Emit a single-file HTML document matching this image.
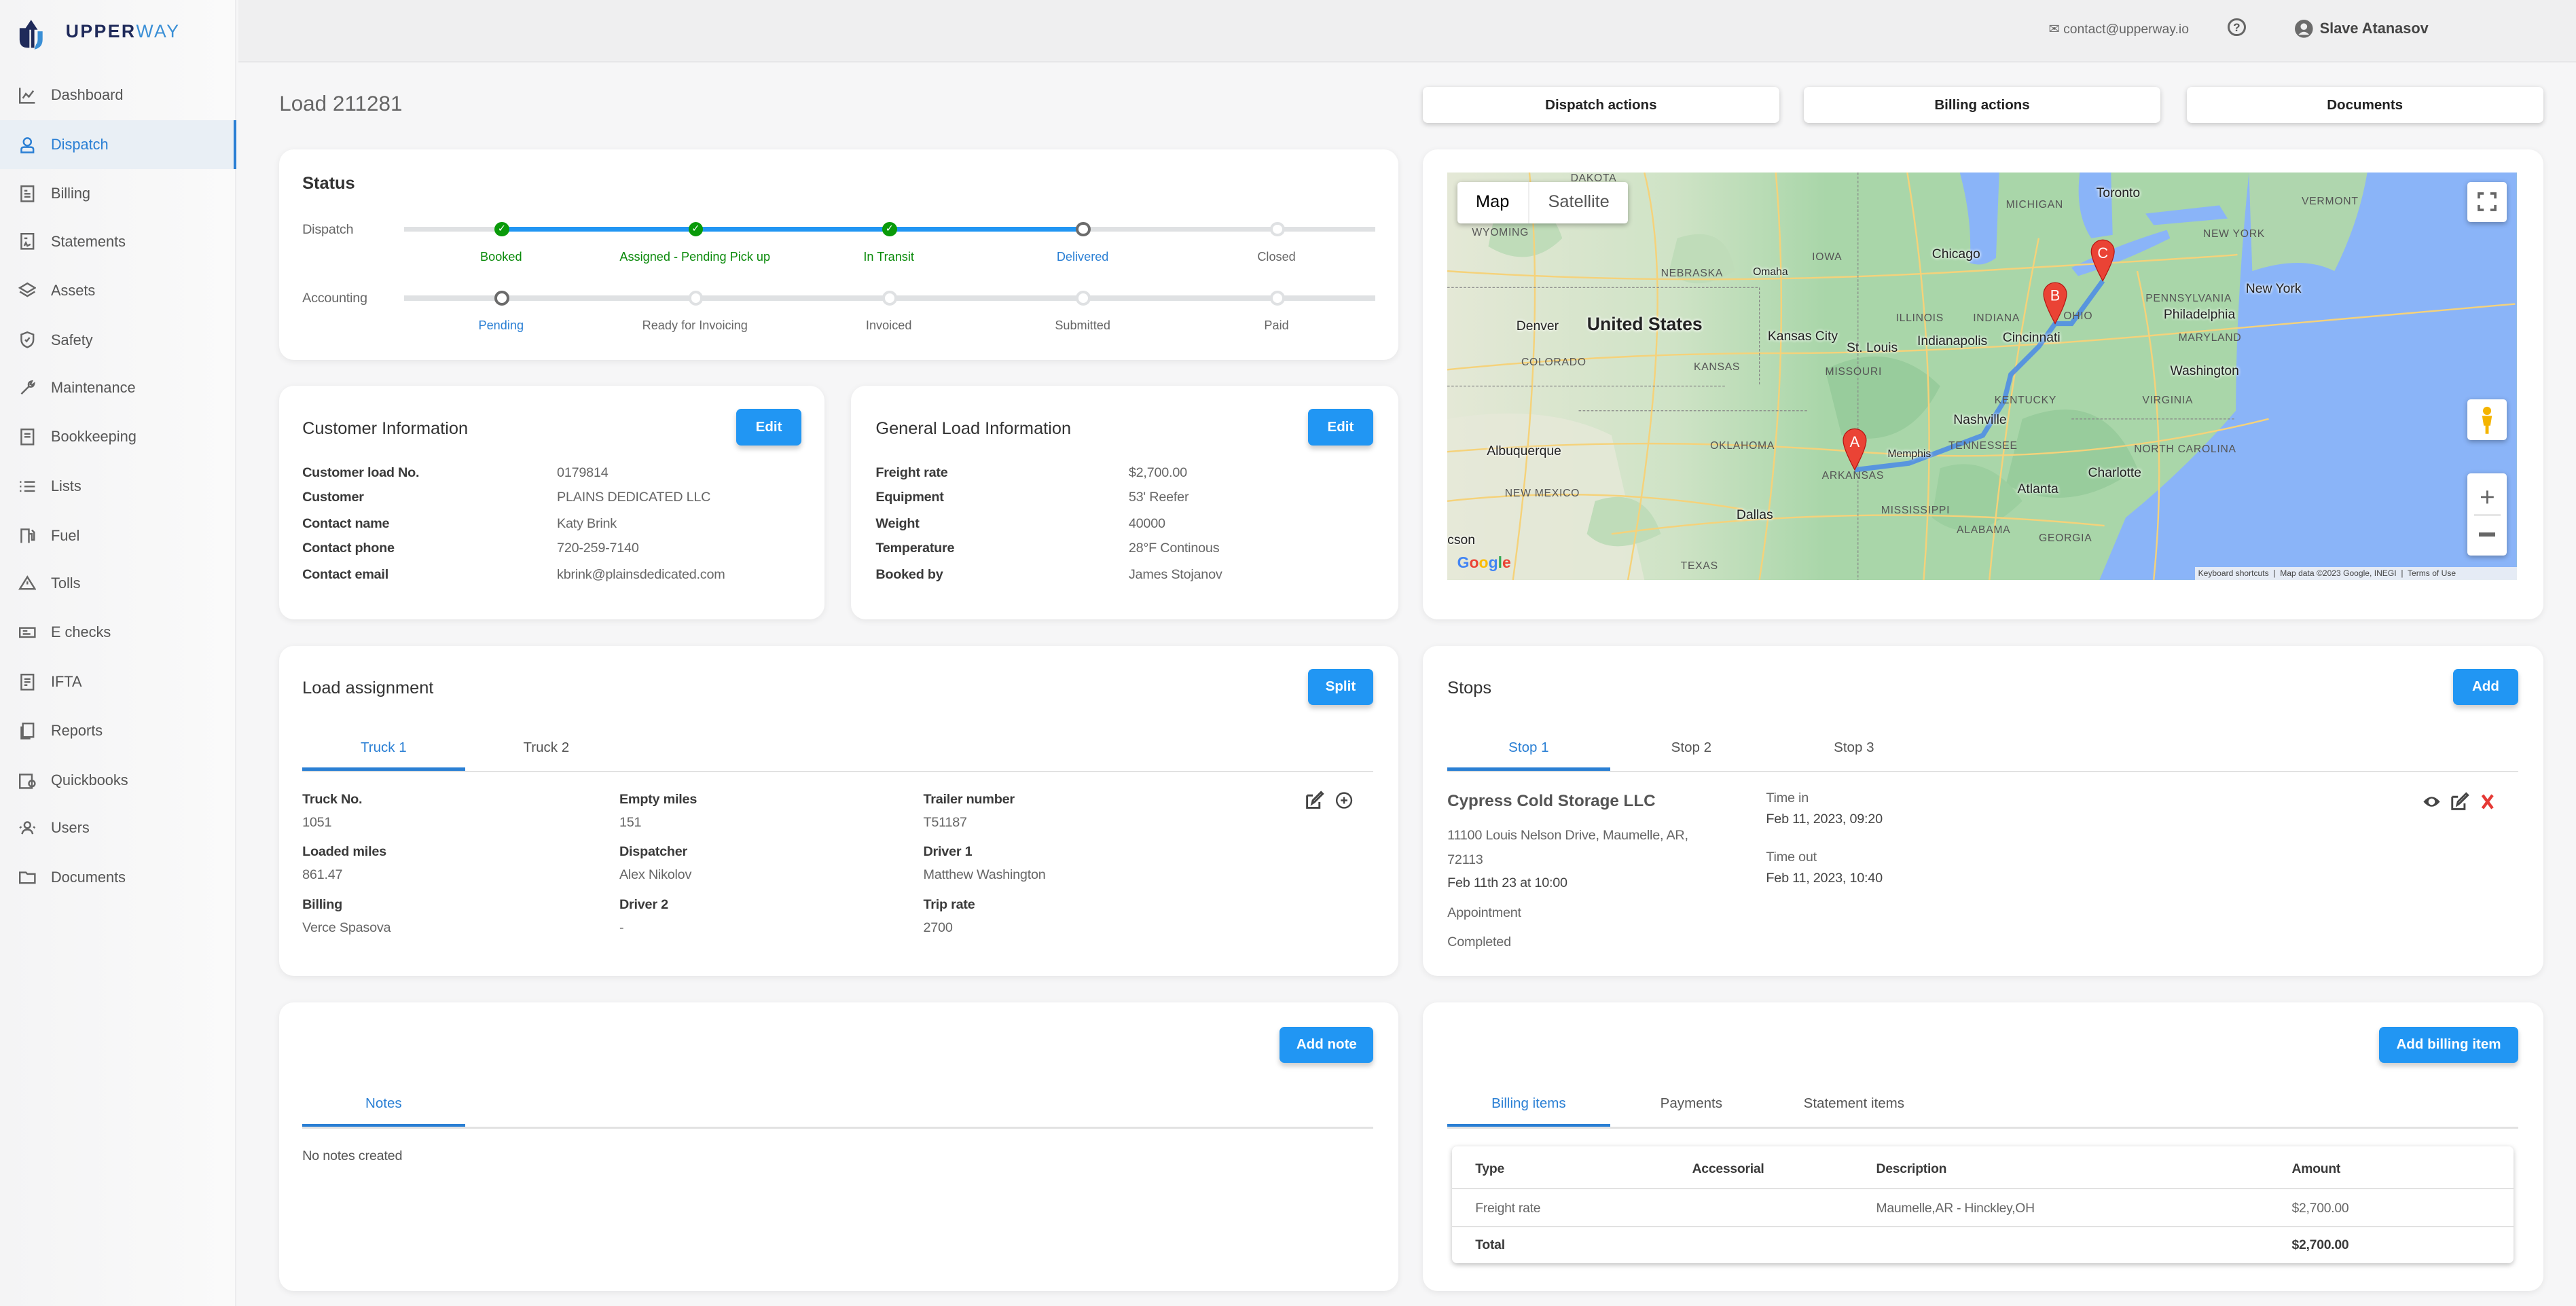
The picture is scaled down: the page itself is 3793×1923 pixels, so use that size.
<!DOCTYPE html>
<html><head><meta charset="utf-8">
<style>
*{box-sizing:border-box;margin:0;padding:0}
html,body{width:3793px;height:1923px;overflow:hidden;background:#f6f6f7}
#z{zoom:2.41901;width:1568px;height:795px;position:relative;font-family:"Liberation Sans",sans-serif;color:#555;font-size:8.5px;background:#f6f6f7}
.a{position:absolute}
.side{left:0;top:0;width:144px;height:795px;background:linear-gradient(90deg,#f4f4f5,#fafafa);border-right:1px solid #ececee}
.nav{position:absolute;left:0;width:144px;height:30px;display:flex;align-items:center;padding-left:11px;font-size:9px;color:#555}
.nav svg{width:11px;height:11px;margin-right:9px;stroke:#666;fill:none;stroke-width:1.1}
.nav.act{background:#e9eff5;color:#2a7fd4;border-right:2px solid #2a7fd4}
.nav.act svg{stroke:#2a7fd4}
.top{left:145px;top:0;width:1423px;height:38px;background:#efeff0;border-bottom:1px solid #e6e6e8}
.card{position:absolute;background:#fff;border-radius:9px;box-shadow:0 1px 4px rgba(0,0,0,.07)}
.btn{position:absolute;background:#fff;border-radius:3px;box-shadow:0 1px 3px rgba(0,0,0,.2);font-size:8.5px;font-weight:bold;color:#222;display:flex;align-items:center;justify-content:center}
.bb{position:absolute;background:#2196f3;color:#fff;border-radius:3px;box-shadow:0 2px 3px rgba(0,0,0,.2);font-size:8.5px;font-weight:bold;display:flex;align-items:center;justify-content:center}
.h{position:absolute;font-size:10.5px;color:#333}
.lb{position:absolute;font-size:8.2px;color:#3a3a3a;font-weight:bold;letter-spacing:-.1px}
.v{position:absolute;font-size:8.2px;color:#666;letter-spacing:-.1px}
.track{position:absolute;height:3px;background:#dfe1e3}
.dot{position:absolute;width:9px;height:9px;border-radius:50%;border:2px solid #dfe1e3;background:#fff}
.dot.g{background:#0a9a0a;border-color:#0a9a0a;color:#fff;font-size:6px;text-align:center;line-height:5px}
.dot.k{border-color:#6b6b6b}
.sl{position:absolute;font-size:7.5px;width:120px;text-align:center;color:#666}
.tab{position:absolute;font-size:8.5px;color:#555;text-align:center;width:99px}
.tab.on{color:#2a7fd4}
.tl{position:absolute;height:1px;background:#e2e2e2}
.tu{position:absolute;height:2px;background:#2a7fd4}
.ml{position:absolute;font-size:6.5px;color:#555;letter-spacing:.3px;white-space:nowrap}
.mc{position:absolute;font-size:8px;color:#222;white-space:nowrap;text-shadow:0 0 2px #fff,0 0 2px #fff}
</style></head><body><div id="z">

<div class="a side"></div>
<svg class="a" style="left:10px;top:9px" width="24" height="22" viewBox="0 0 24 22"><path d="M2 8 V15 Q2 20 7 20 H8 V8 Z" fill="#1f2a5a"/><path d="M5 9 L9 3 L13 9 H11 V20 H9 V9Z" fill="#1f2a5a"/><path d="M13 10 H16 V15 Q16 20 11 21 L12 18 Q13 17 13 15Z" fill="#3a8fd6"/></svg>
<div class="a" style="left:40px;top:13px;font-size:11px;font-weight:bold;letter-spacing:1px;color:#1f2a5a">UPPER<span style="color:#3a8fd6;font-weight:normal">WAY</span></div>

<div class="nav" style="top:43px"><svg viewBox="0 0 12 12"><path d="M1 1V11H11M3 8L5 5L7 7L10 3"/></svg>Dashboard</div>
<div class="nav act" style="top:73px"><svg viewBox="0 0 12 12"><circle cx="6" cy="4" r="2.5"/><path d="M2 11V9Q2 7.5 4 7.5H8Q10 7.5 10 9V11Z"/></svg>Dispatch</div>
<div class="nav" style="top:103px"><svg viewBox="0 0 12 12"><rect x="2" y="1" width="8" height="10"/><path d="M4 4H6M4 6H8M4 8H8"/></svg>Billing</div>
<div class="nav" style="top:132px"><svg viewBox="0 0 12 12"><rect x="2" y="1" width="8" height="10"/><path d="M4 4H6M4 9L5 7L6 9L8 8"/></svg>Statements</div>
<div class="nav" style="top:162px"><svg viewBox="0 0 12 12"><path d="M6 1L11 4L6 7L1 4Z M1 6.5L6 9.5L11 6.5"/></svg>Assets</div>
<div class="nav" style="top:192px"><svg viewBox="0 0 12 12"><path d="M6 1L10 2.5V6Q10 9.5 6 11Q2 9.5 2 6V2.5Z M4.5 6L5.5 7L7.5 4.5"/></svg>Safety</div>
<div class="nav" style="top:221px"><svg viewBox="0 0 12 12"><path d="M2 10L7 5Q6 2 9 1.5L8 3.5L9 4L10.5 3Q10 6 7 5"/></svg>Maintenance</div>
<div class="nav" style="top:251px"><svg viewBox="0 0 12 12"><rect x="2" y="1" width="8" height="10"/><path d="M4 4H8M4 6H8"/></svg>Bookkeeping</div>
<div class="nav" style="top:281px"><svg viewBox="0 0 12 12"><path d="M1 3H2M4 3H11M1 6H2M4 6H11M1 9H2M4 9H11"/></svg>Lists</div>
<div class="nav" style="top:311px"><svg viewBox="0 0 12 12"><path d="M2 11V2H7V11M7 5H9V9H10.5V4L9 2.5"/></svg>Fuel</div>
<div class="nav" style="top:340px"><svg viewBox="0 0 12 12"><path d="M1 10H11L6 2Z M6 5V7"/></svg>Tolls</div>
<div class="nav" style="top:370px"><svg viewBox="0 0 12 12"><rect x="1" y="3" width="10" height="6"/><path d="M3 5H6M3 7H8"/></svg>E checks</div>
<div class="nav" style="top:400px"><svg viewBox="0 0 12 12"><rect x="2" y="1" width="8" height="10"/><path d="M4 4H8M4 6H8M4 8H6"/></svg>IFTA</div>
<div class="nav" style="top:430px"><svg viewBox="0 0 12 12"><rect x="3" y="1" width="7" height="9"/><path d="M2 3V11H8"/></svg>Reports</div>
<div class="nav" style="top:460px"><svg viewBox="0 0 12 12"><rect x="1" y="2" width="8" height="9"/><circle cx="9" cy="8" r="2"/></svg>Quickbooks</div>
<div class="nav" style="top:489px"><svg viewBox="0 0 12 12"><circle cx="6" cy="4" r="2"/><path d="M2.5 10Q3 7 6 7Q9 7 9.5 10M1 6L2 5M11 6L10 5"/></svg>Users</div>
<div class="nav" style="top:519px"><svg viewBox="0 0 12 12"><path d="M1 3H5L6 4H11V10H1Z"/></svg>Documents</div>

<div class="a top"></div>
<div class="a" style="left:1247px;top:13px;font-size:8px;color:#666">✉ contact@upperway.io</div>
<div class="a" style="left:1356px;top:11px;width:11px;height:11px;border:1.3px solid #666;border-radius:50%;font-size:7px;text-align:center;line-height:9px;color:#555;font-weight:bold">?</div>
<svg class="a" style="left:1397px;top:12px" width="11" height="11"><circle cx="5.5" cy="5.5" r="5.5" fill="#6b6b6b"/><circle cx="5.5" cy="4.2" r="2" fill="#efeff0"/><path d="M2.2 9.2Q5.5 5.5 8.8 9.2" fill="#efeff0"/></svg>
<div class="a" style="left:1412px;top:12px;font-size:9px;font-weight:bold;color:#444">Slave Atanasov</div>

<div class="a" style="left:170px;top:56px;font-size:13px;color:#666">Load 211281</div>
<div class="btn" style="left:866px;top:53px;width:217px;height:22px">Dispatch actions</div>
<div class="btn" style="left:1098px;top:53px;width:217px;height:22px">Billing actions</div>
<div class="btn" style="left:1331px;top:53px;width:217px;height:22px">Documents</div>

<div class="card" style="left:170px;top:91px;width:681px;height:128px"></div>
<div class="h" style="left:184px;top:106px;font-weight:bold">Status</div>
<div class="v" style="left:184px;top:135px">Dispatch</div>
<div class="v" style="left:184px;top:177px">Accounting</div>
<div class="track" style="left:246px;top:138px;width:591px"></div>
<div class="track" style="left:305px;top:138px;width:354px;background:#2196f3"></div>
<div class="track" style="left:246px;top:180px;width:591px"></div>
<div class="dot g" style="left:301px;top:135px">✓</div><div class="dot g" style="left:419px;top:135px">✓</div><div class="dot g" style="left:537px;top:135px">✓</div><div class="dot k" style="left:655px;top:135px"></div><div class="dot" style="left:773px;top:135px"></div>
<div class="dot k" style="left:301px;top:177px"></div><div class="dot" style="left:419px;top:177px"></div><div class="dot" style="left:537px;top:177px"></div><div class="dot" style="left:655px;top:177px"></div><div class="dot" style="left:773px;top:177px"></div>
<div class="sl" style="left:245px;top:152px;color:#0a8a0a">Booked</div>
<div class="sl" style="left:363px;top:152px;color:#0a8a0a">Assigned - Pending Pick up</div>
<div class="sl" style="left:481px;top:152px;color:#0a8a0a">In Transit</div>
<div class="sl" style="left:599px;top:152px;color:#2a7fd4">Delivered</div>
<div class="sl" style="left:717px;top:152px">Closed</div>
<div class="sl" style="left:245px;top:194px;color:#2a7fd4">Pending</div>
<div class="sl" style="left:363px;top:194px">Ready for Invoicing</div>
<div class="sl" style="left:481px;top:194px">Invoiced</div>
<div class="sl" style="left:599px;top:194px">Submitted</div>
<div class="sl" style="left:717px;top:194px">Paid</div>

<div class="card" style="left:170px;top:235px;width:332px;height:142px"></div>
<div class="h" style="left:184px;top:255px">Customer Information</div>
<div class="bb" style="left:448px;top:249px;width:40px;height:22px">Edit</div>
<div class="lb" style="left:184px;top:283px">Customer load No.</div><div class="v" style="left:339px;top:283px">0179814</div>
<div class="lb" style="left:184px;top:298px">Customer</div><div class="v" style="left:339px;top:298px">PLAINS DEDICATED LLC</div>
<div class="lb" style="left:184px;top:314px">Contact name</div><div class="v" style="left:339px;top:314px">Katy Brink</div>
<div class="lb" style="left:184px;top:329px">Contact phone</div><div class="v" style="left:339px;top:329px">720-259-7140</div>
<div class="lb" style="left:184px;top:345px">Contact email</div><div class="v" style="left:339px;top:345px">kbrink@plainsdedicated.com</div>

<div class="card" style="left:518px;top:235px;width:333px;height:142px"></div>
<div class="h" style="left:533px;top:255px">General Load Information</div>
<div class="bb" style="left:796px;top:249px;width:40px;height:22px">Edit</div>
<div class="lb" style="left:533px;top:283px">Freight rate</div><div class="v" style="left:687px;top:283px">$2,700.00</div>
<div class="lb" style="left:533px;top:298px">Equipment</div><div class="v" style="left:687px;top:298px">53' Reefer</div>
<div class="lb" style="left:533px;top:314px">Weight</div><div class="v" style="left:687px;top:314px">40000</div>
<div class="lb" style="left:533px;top:329px">Temperature</div><div class="v" style="left:687px;top:329px">28°F Continous</div>
<div class="lb" style="left:533px;top:345px">Booked by</div><div class="v" style="left:687px;top:345px">James Stojanov</div>

<div class="card" style="left:866px;top:91px;width:682px;height:286px"></div>
<div class="a" style="left:881px;top:105px;width:651px;height:248px;overflow:hidden;background:#a9d6a9">
<svg width="651" height="248" style="position:absolute;left:0;top:0">
<defs><linearGradient id="w" x1="0" x2="1"><stop offset="0" stop-color="#e4e8d6"/><stop offset=".6" stop-color="#cfe3c6"/><stop offset="1" stop-color="#a9d6a9"/></linearGradient></defs>
<path d="M0 0H230V248H0Z" fill="url(#w)"/>
<path d="M0 150 Q60 140 100 160 L120 248 H0Z" fill="#e6e9d8" opacity=".8"/>
<path d="M30 20 Q60 10 70 40 Q50 60 25 45Z M90 200 Q120 190 130 220 Q100 235 85 220Z M140 40 Q170 30 175 60 Q150 75 135 60Z" fill="#bfdcb9"/>
<path d="M230 120 Q270 100 300 130 Q280 170 240 160Z" fill="#98cc9c"/>
<path d="M350 150 Q400 130 420 180 Q380 210 340 190Z" fill="#98cc9c"/>
<path d="M300 180 Q330 170 350 200 Q320 230 295 210Z" fill="#9ccf9f"/>
<path d="M488 0 Q480 80 480 145 Q450 180 413 210 L397 248 H651 V0Z" fill="#8ab4f8"/>
<path d="M488 0 H560 Q555 30 540 60 Q520 50 490 60Z" fill="#afd6ae"/>
<path d="M312 0 Q320 30 318 55 Q326 58 334 52 L336 0Z" fill="#8ab4f8"/>
<path d="M385 0 Q382 25 392 40 L405 38 L404 0Z" fill="#8ab4f8"/>
<path d="M380 58 Q405 45 438 35 L440 40 Q410 55 384 63Z" fill="#8ab4f8"/>
<path d="M425 25 L470 20 L475 28 L430 32Z" fill="#8ab4f8"/>
<g stroke="#f5d27a" stroke-width="1" fill="none">
<path d="M0 120 Q100 110 200 110 T420 100 T650 80"/>
<path d="M0 170 Q120 160 250 170 T500 150"/>
<path d="M50 0 Q60 100 40 248"/>
<path d="M200 0 Q210 120 190 248"/>
<path d="M280 0 Q300 120 290 248"/>
<path d="M360 40 Q340 140 330 248"/>
<path d="M420 60 Q440 150 430 248"/>
<path d="M0 60 Q150 70 320 60 T480 50"/>
<path d="M100 220 Q250 200 400 215"/>
<path d="M120 0 Q140 80 110 248"/>
<path d="M0 200 Q90 190 180 205"/>
</g>
<g stroke="#888" stroke-width=".5" stroke-dasharray="1.5 1" fill="none">
<path d="M0 70H190V130M80 145H220M250 0V248M0 130H170M380 150H480"/>
</g>
<path d="M248 181 L281 177 L326 160 L339 139 L343 123 L360 106 L370 92 L380 92 L399 66" stroke="#4a8ae8" stroke-width="3" fill="none" opacity=".85"/>
<g fill="#ea4335" stroke="#b31412" stroke-width=".5">
<path d="M248 181 Q241 168 241 163 A7 7 0 1 1 255 163 Q255 168 248 181Z"/>
<path d="M370 92 Q363 79 363 74 A7 7 0 1 1 377 74 Q377 79 370 92Z"/>
<path d="M399 66 Q392 53 392 48 A7 7 0 1 1 406 48 Q406 53 399 66Z"/>
</g>
<text x="248" y="167" fill="#fff" font-size="9" text-anchor="middle" font-family="Liberation Sans">A</text>
<text x="370" y="78" fill="#fff" font-size="9" text-anchor="middle" font-family="Liberation Sans">B</text>
<text x="399" y="52" fill="#fff" font-size="9" text-anchor="middle" font-family="Liberation Sans">C</text>
</svg>
<div class="mc" style="left:85px;top:86px;font-size:11px;font-weight:bold">United States</div>
<div class="mc" style="left:42px;top:89px">Denver</div>
<div class="mc" style="left:195px;top:95px">Kansas City</div>
<div class="mc" style="left:243px;top:102px">St. Louis</div>
<div class="mc" style="left:295px;top:45px">Chicago</div>
<div class="mc" style="left:395px;top:8px">Toronto</div>
<div class="mc" style="left:286px;top:98px">Indianapolis</div>
<div class="mc" style="left:338px;top:96px">Cincinnati</div>
<div class="mc" style="left:436px;top:82px">Philadelphia</div>
<div class="mc" style="left:486px;top:66px">New York</div>
<div class="mc" style="left:440px;top:116px">Washington</div>
<div class="mc" style="left:308px;top:146px">Nashville</div>
<div class="mc" style="left:24px;top:165px">Albuquerque</div>
<div class="mc" style="left:390px;top:178px">Charlotte</div>
<div class="mc" style="left:347px;top:188px">Atlanta</div>
<div class="mc" style="left:176px;top:204px">Dallas</div>
<div class="mc" style="left:0px;top:219px">cson</div>
<div class="mc" style="left:268px;top:168px;font-size:6.5px">Memphis</div>
<div class="mc" style="left:186px;top:57px;font-size:6.5px">Omaha</div>
<div class="ml" style="left:130px;top:58px">NEBRASKA</div><div class="ml" style="left:222px;top:48px">IOWA</div>
<div class="ml" style="left:45px;top:112px">COLORADO</div><div class="ml" style="left:150px;top:115px">KANSAS</div>
<div class="ml" style="left:230px;top:118px">MISSOURI</div><div class="ml" style="left:273px;top:85px">ILLINOIS</div>
<div class="ml" style="left:320px;top:85px">INDIANA</div><div class="ml" style="left:375px;top:84px">OHIO</div>
<div class="ml" style="left:333px;top:135px">KENTUCKY</div><div class="ml" style="left:423px;top:135px">VIRGINIA</div>
<div class="ml" style="left:305px;top:163px">TENNESSEE</div><div class="ml" style="left:160px;top:163px">OKLAHOMA</div>
<div class="ml" style="left:228px;top:181px">ARKANSAS</div><div class="ml" style="left:35px;top:192px">NEW MEXICO</div>
<div class="ml" style="left:264px;top:202px">MISSISSIPPI</div><div class="ml" style="left:310px;top:214px">ALABAMA</div>
<div class="ml" style="left:360px;top:219px">GEORGIA</div><div class="ml" style="left:142px;top:236px">TEXAS</div>
<div class="ml" style="left:425px;top:73px">PENNSYLVANIA</div><div class="ml" style="left:340px;top:16px">MICHIGAN</div>
<div class="ml" style="left:460px;top:34px">NEW YORK</div><div class="ml" style="left:418px;top:165px">NORTH CAROLINA</div>
<div class="ml" style="left:15px;top:33px">WYOMING</div><div class="ml" style="left:445px;top:97px">MARYLAND</div>
<div class="ml" style="left:520px;top:14px">VERMONT</div><div class="ml" style="left:75px;top:0px">DAKOTA</div>
<div class="a" style="left:6px;top:6px;width:104px;height:25px;background:#fff;border-radius:2px;box-shadow:0 1px 3px rgba(0,0,0,.3)"></div>
<div class="a" style="left:6px;top:12px;width:43px;text-align:center;font-size:10.5px;color:#000">Map</div>
<div class="a" style="left:49px;top:6px;width:1px;height:25px;background:#eee"></div>
<div class="a" style="left:50px;top:12px;width:60px;text-align:center;font-size:10.5px;color:#555">Satellite</div>
<div class="a" style="left:621px;top:6px;width:24px;height:24px;background:#fff;border-radius:2px;box-shadow:0 1px 3px rgba(0,0,0,.3)"><svg width="24" height="24"><path d="M7 10V7H10M14 7H17V10M17 14V17H14M10 17H7V14" stroke="#666" stroke-width="1.5" fill="none"/></svg></div>
<div class="a" style="left:621px;top:138px;width:24px;height:25px;background:#fff;border-radius:2px;box-shadow:0 1px 3px rgba(0,0,0,.3)"><svg width="24" height="25"><circle cx="12" cy="7" r="2.5" fill="#f4b400"/><path d="M9 10H15L14 16H13V21H11V16H10Z" fill="#f4b400"/></svg></div>
<div class="a" style="left:621px;top:183px;width:24px;height:50px;background:#fff;border-radius:2px;box-shadow:0 1px 3px rgba(0,0,0,.3)"><div class="a" style="left:0;top:6px;width:24px;text-align:center;font-size:16px;color:#666">+</div><div class="a" style="left:4px;top:25px;width:16px;height:1px;background:#e6e6e6"></div><div class="a" style="left:7px;top:36px;width:10px;height:2.5px;background:#666"></div></div>
<div class="a" style="left:6px;top:232px;font-size:9.5px;font-weight:bold;color:#4285f4">G<span style="color:#ea4335">o</span><span style="color:#fbbc05">o</span>g<span style="color:#34a853">l</span><span style="color:#ea4335">e</span></div>
<div class="a" style="left:455px;top:240px;width:196px;height:8px;background:rgba(245,245,245,.85);font-size:5px;color:#444;line-height:8px;white-space:nowrap;padding-left:2px">Keyboard shortcuts &nbsp;|&nbsp; Map data ©2023 Google, INEGI &nbsp;|&nbsp; Terms of Use</div>
</div>

<div class="card" style="left:170px;top:393px;width:681px;height:201px"></div>
<div class="h" style="left:184px;top:413px">Load assignment</div>
<div class="bb" style="left:796px;top:407px;width:40px;height:22px">Split</div>
<div class="tab on" style="left:184px;top:450px">Truck 1</div>
<div class="tab" style="left:283px;top:450px">Truck 2</div>
<div class="tl" style="left:184px;top:469px;width:652px"></div>
<div class="tu" style="left:184px;top:467px;width:99px"></div>
<div class="lb" style="left:184px;top:482px">Truck No.</div><div class="v" style="left:184px;top:496px">1051</div>
<div class="lb" style="left:184px;top:514px">Loaded miles</div><div class="v" style="left:184px;top:528px">861.47</div>
<div class="lb" style="left:184px;top:546px">Billing</div><div class="v" style="left:184px;top:560px">Verce Spasova</div>
<div class="lb" style="left:377px;top:482px">Empty miles</div><div class="v" style="left:377px;top:496px">151</div>
<div class="lb" style="left:377px;top:514px">Dispatcher</div><div class="v" style="left:377px;top:528px">Alex Nikolov</div>
<div class="lb" style="left:377px;top:546px">Driver 2</div><div class="v" style="left:377px;top:560px">-</div>
<div class="lb" style="left:562px;top:482px">Trailer number</div><div class="v" style="left:562px;top:496px">T51187</div>
<div class="lb" style="left:562px;top:514px">Driver 1</div><div class="v" style="left:562px;top:528px">Matthew Washington</div>
<div class="lb" style="left:562px;top:546px">Trip rate</div><div class="v" style="left:562px;top:560px">2700</div>
<svg class="a" style="left:794px;top:481px" width="32" height="12"><path d="M1.5 3H5M1.5 3V10.5H9V7M4.5 8L5 6L10 1L11 2L6 7Z" stroke="#444" stroke-width="1.2" fill="none"/><circle cx="24" cy="6" r="4.5" stroke="#444" stroke-width="1" fill="none"/><path d="M24 4V8M22 6H26" stroke="#444" stroke-width="1"/></svg>

<div class="card" style="left:866px;top:393px;width:682px;height:201px"></div>
<div class="h" style="left:881px;top:413px">Stops</div>
<div class="bb" style="left:1493px;top:407px;width:40px;height:22px">Add</div>
<div class="tab on" style="left:881px;top:450px">Stop 1</div>
<div class="tab" style="left:980px;top:450px">Stop 2</div>
<div class="tab" style="left:1079px;top:450px">Stop 3</div>
<div class="tl" style="left:881px;top:469px;width:652px"></div>
<div class="tu" style="left:881px;top:467px;width:99px"></div>
<div class="a" style="left:881px;top:482px;font-size:10px;font-weight:bold;color:#555">Cypress Cold Storage LLC</div>
<div class="v" style="left:881px;top:501px;line-height:15px;width:165px">11100 Louis Nelson Drive, Maumelle, AR, 72113</div>
<div class="v" style="left:881px;top:533px;color:#444">Feb 11th 23 at 10:00</div>
<div class="v" style="left:881px;top:551px">Appointment</div>
<div class="v" style="left:881px;top:569px">Completed</div>
<div class="v" style="left:1075px;top:481px">Time in</div>
<div class="v" style="left:1075px;top:494px;color:#444">Feb 11, 2023, 09:20</div>
<div class="v" style="left:1075px;top:517px">Time out</div>
<div class="v" style="left:1075px;top:530px;color:#444">Feb 11, 2023, 10:40</div>
<svg class="a" style="left:1474px;top:482px" width="48" height="12"><path d="M1 6Q6 0 11 6Q6 12 1 6Z" fill="#444"/><circle cx="6" cy="6" r="2" fill="#fff"/><path d="M18.5 3H22M18.5 3V10.5H26V7M21.5 8L22 6L27 1L28 2L23 7Z" stroke="#444" stroke-width="1.2" fill="none"/><path d="M37 2L43 10M43 2L37 10" stroke="#e53935" stroke-width="1.8"/></svg>

<div class="card" style="left:170px;top:610px;width:681px;height:176px"></div>
<div class="bb" style="left:779px;top:625px;width:57px;height:22px">Add note</div>
<div class="tab on" style="left:184px;top:667px">Notes</div>
<div class="tl" style="left:184px;top:686px;width:652px"></div>
<div class="tu" style="left:184px;top:684px;width:99px"></div>
<div class="v" style="left:184px;top:699px;color:#555">No notes created</div>

<div class="card" style="left:866px;top:610px;width:682px;height:176px"></div>
<div class="bb" style="left:1448px;top:625px;width:85px;height:22px">Add billing item</div>
<div class="tab on" style="left:881px;top:667px">Billing items</div>
<div class="tab" style="left:980px;top:667px">Payments</div>
<div class="tab" style="left:1079px;top:667px">Statement items</div>
<div class="tl" style="left:881px;top:686px;width:652px"></div>
<div class="tu" style="left:881px;top:684px;width:99px"></div>
<div class="a" style="left:884px;top:698px;width:646px;height:71px;background:#fff;border-radius:3px;box-shadow:0 1px 3px rgba(0,0,0,.25)"></div>
<div class="tl" style="left:884px;top:723px;width:646px"></div>
<div class="tl" style="left:884px;top:746px;width:646px"></div>
<div class="lb" style="left:898px;top:707px;font-size:8px">Type</div>
<div class="lb" style="left:1030px;top:707px;font-size:8px">Accessorial</div>
<div class="lb" style="left:1142px;top:707px;font-size:8px">Description</div>
<div class="lb" style="left:1395px;top:707px;font-size:8px">Amount</div>
<div class="v" style="left:898px;top:731px;font-size:8px">Freight rate</div>
<div class="v" style="left:1142px;top:731px;font-size:8px">Maumelle,AR - Hinckley,OH</div>
<div class="v" style="left:1395px;top:731px;font-size:8px">$2,700.00</div>
<div class="lb" style="left:898px;top:753px;font-size:8px">Total</div>
<div class="lb" style="left:1395px;top:753px;font-size:8px">$2,700.00</div>

</div></body></html>
